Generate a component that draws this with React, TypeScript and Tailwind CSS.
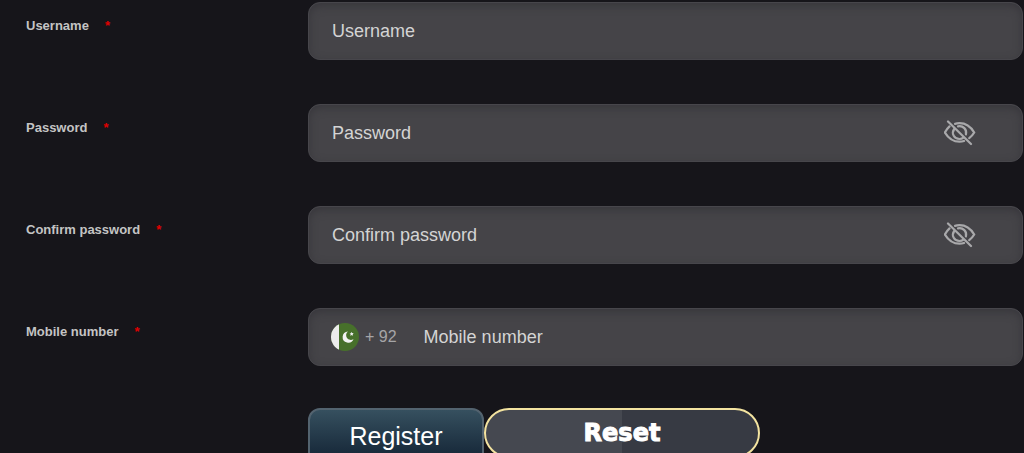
import React, { useState } from "react";

const fields = [
  { id: "username", label: "Username", type: "text" },
  { id: "password", label: "Password", type: "password" },
  { id: "confirm", label: "Confirm password", type: "password" },
  { id: "mobile", label: "Mobile number", type: "tel" },
];

function EyeOffIcon() {
  return (
    <svg className="w-8 h-[26px]" viewBox="0 0 32 26" fill="none" stroke="currentColor" strokeWidth="2.2" strokeLinecap="round">
      <path d="M4 1.500 27 24" />
      <path d="M11 3.900C12.500 3.400 14 3.200 15.500 3.200c6.500 0 11.500 4 14.700 9.300-1.400 2.400-3 4.200-5 5.700" />
      <path d="M5.500 6.400C3.600 8.200 2.200 10 .9 12.500c3.200 5.200 8.200 9.200 14.600 9.200 1.600 0 3-.2 4.500-.7" />
      <path d="M14 6.400c5-1 9.200 3 7.900 8" />
      <path d="M10.200 9c-3.300 4.600.2 10 5.300 10 1.500 0 2.800-.4 4-1.300" />
    </svg>
  );
}

function PakistanFlag() {
  return (
    <svg className="w-7 h-7 shrink-0 rounded-full" viewBox="0 0 28 28">
      <rect width="28" height="28" fill="#47702b" />
      <rect width="8" height="28" fill="#ececec" />
      <path d="M17 8.500a5.600 5.600 0 1 0 5.500 7.500 4.600 4.600 0 1 1-5.500-7.500z" fill="#f2f2f2" />
      <path d="m20.500 8.800.7 1.300 1.500.1-1 1.100.4 1.500-1.400-.7-1.300.8.300-1.500-1.100-1 1.500-.2z" fill="#f2f2f2" />
    </svg>
  );
}

export default function RegisterPage() {
  const [visible, setVisible] = useState<Record<string, boolean>>({});

  return (
    <main className="h-screen overflow-hidden bg-[#16151a] pt-[2px] pr-px font-['Liberation_Sans',Arial,sans-serif]">
      <form>
        <div className="space-y-11">
          {fields.map((field) => (
            <div key={field.id} className="flex items-start">
              <label htmlFor={field.id} className="w-[308px] shrink-0 pt-[14px] pl-[26px] text-[13px] leading-5 font-bold text-[#c4c4c4]">
                {field.label}
                <span className="ml-4 text-[#e00000]">*</span>
              </label>
              <div className="flex flex-1 items-center h-[58px] px-[22px] rounded-xl border border-[#47464b] bg-[#454448] shadow-[inset_0_3px_9px_#38373c]">
                {field.type === "tel" && (
                  <div className="flex items-center gap-[6px] mr-[26px] text-base text-[#a5a5a7]">
                    <PakistanFlag />
                    <span>+ 92</span>
                  </div>
                )}
                <input
                  id={field.id}
                  type={field.type === "password" && visible[field.id] ? "text" : field.type}
                  placeholder={field.label}
                  className="flex-1 min-w-0 pl-px bg-transparent text-lg text-[#d4d4d4] placeholder:text-[#d4d4d4] outline-none"
                />
                {field.type === "password" && (
                  <button
                    type="button"
                    aria-label="Toggle visibility"
                    onClick={() => setVisible({ ...visible, [field.id]: !visible[field.id] })}
                    className="mr-6 text-[#a9a9ab]"
                  >
                    <EyeOffIcon />
                  </button>
                )}
              </div>
            </div>
          ))}
        </div>

        <div className="flex items-start mt-[42px] pl-[308px]">
          <button type="submit" className="w-[176px] h-[58px] rounded-xl border-2 border-[#53636f] bg-linear-to-b from-[#36505f] to-[#122233] text-[25px] text-white">
            Register
          </button>
          <button type="reset" className="w-[276px] h-[50px] rounded-full border-2 border-[#f3e3a0] bg-linear-to-r from-[#454850] from-50% to-[#373a43] to-50% font-['Arial_Black','DejaVu_Sans',sans-serif] text-2xl font-bold text-white [-webkit-text-stroke:1px_white]">
            Reset
          </button>
        </div>
      </form>
    </main>
  );
}
